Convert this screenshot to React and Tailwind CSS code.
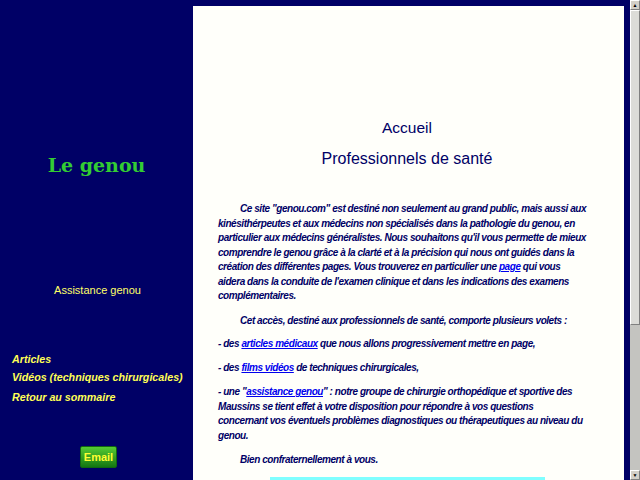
import React from 'react';

const body = "font-['Liberation_Sans',Arial,sans-serif] font-bold italic text-[10px] tracking-[-0.45px] leading-[14.5px] text-[#000066]";

const Link = ({ children }) => (
    <a href="#" className="text-[#0000ee] underline">{children}</a>
);

const App = () => {
    return (
        <div className="flex h-[480px] w-[640px] overflow-hidden bg-[#000066]">
            {/* left column */}
            <aside className="flex w-[193px] shrink-0 flex-col">
                <h1 className="mt-[152px] text-center font-['DejaVu_Serif',serif] text-[19px] font-bold leading-[26px] text-[#33cc33]">
                    Le genou
                </h1>
                <p className="mt-[105px] pl-[2px] text-center font-['Liberation_Sans',Arial,sans-serif] text-[11px] leading-[14px] text-[#ffff66]">
                    Assistance genou
                </p>
                <nav className="mt-[53px] flex flex-col pl-[12px] font-['Liberation_Sans',Arial,sans-serif] text-[10.7px] font-bold italic text-[#ffff55]">
                    <a href="#" className="leading-[18px]">Articles</a>
                    <a href="#" className="leading-[18px]">Vidéos (techniques chirurgicales)</a>
                    <a href="#" className="mt-[2px] leading-[18px]">Retour au sommaire</a>
                </nav>
                <div className="mt-[40px] flex justify-center pl-[4px]">
                    <button className="h-[22px] w-[37px] rounded-[2px] border border-[#116611] bg-gradient-to-b from-[#55cc33] to-[#117711] font-['Liberation_Sans',Arial,sans-serif] text-[11px] font-bold leading-[20px] text-[#ffff33]">
                        Email
                    </button>
                </div>
            </aside>

            {/* main panel */}
            <main className="mt-[6px] w-[431px] shrink-0 bg-[#fffffa] pl-[25px] pr-[28px]">
                <h2 className="mt-[113px] text-center font-['Liberation_Sans',Arial,sans-serif] text-[15.5px] leading-[18px] text-[#000066]">
                    Accueil
                </h2>
                <h2 className="mt-[13px] text-center font-['Liberation_Sans',Arial,sans-serif] text-[16px] leading-[18px] text-[#000066]">
                    Professionnels de santé
                </h2>
                <div className={`mt-[34px] ${body}`}>
                    <p className="indent-[22px]">
                        Ce site "genou.com" est destiné non seulement au grand public, mais aussi aux kinésithérpeutes et aux médecins non spécialisés dans la pathologie du genou, en particulier aux médecins généralistes. Nous souhaitons qu'il vous permette de mieux comprendre le genou grâce à la clarté et à la précision qui nous ont guidés dans la création des différentes pages. Vous trouverez en particulier une <Link>page</Link> qui vous<br />aidera dans la conduite de l'examen clinique et dans les indications des examens complémentaires.
                    </p>
                    <p className="mt-[10px] indent-[22px]">
                        Cet accès, destiné aux professionnels de santé, comporte plusieurs volets :
                    </p>
                    <p className="mt-[9px]">
                        - des <Link>articles médicaux</Link> que nous allons progressivement mettre en page,
                    </p>
                    <p className="mt-[9.5px]">
                        - des <Link>films vidéos</Link> de techniques chirurgicales,
                    </p>
                    <p className="mt-[9.5px]">
                        - une "<Link>assistance genou</Link>" : notre groupe de chirurgie orthopédique et sportive des Maussins se tient effet à votre disposition pour répondre à vos questions<br />concernant vos éventuels problèmes diagnostiques ou thérapeutiques au niveau du genou.
                    </p>
                    <p className="mt-[10px] indent-[22px]">
                        Bien confraternellement à vous.
                    </p>
                </div>
                <div className="ml-[52px] mt-[9px] w-[275px] bg-[#80ffff] pt-[1px] text-center font-['Liberation_Sans',Arial,sans-serif] text-[8px] leading-[10px] text-[#000066]">
                    GROUPE DE CHIRURGIE
                </div>
            </main>

            <div className="w-[6px] shrink-0" />

            {/* scrollbar */}
            <div className="flex w-[10px] shrink-0 flex-col bg-[#c4c4c0]">
                <div className="flex h-[10px] items-center justify-center border border-b-[#808080] border-r-[#808080] border-l-white border-t-white bg-[#d4d0c8] text-[5px] leading-none text-black">▲</div>
                <div className="h-[315px] border border-b-[#808080] border-r-[#808080] border-l-white border-t-white bg-[#dcdcd8]" />
                <div className="flex-1" />
                <div className="flex h-[10px] items-center justify-center border border-b-[#808080] border-r-[#808080] border-l-white border-t-white bg-[#d4d0c8] text-[5px] leading-none text-black">▼</div>
            </div>
        </div>
    );
};

export default App;
